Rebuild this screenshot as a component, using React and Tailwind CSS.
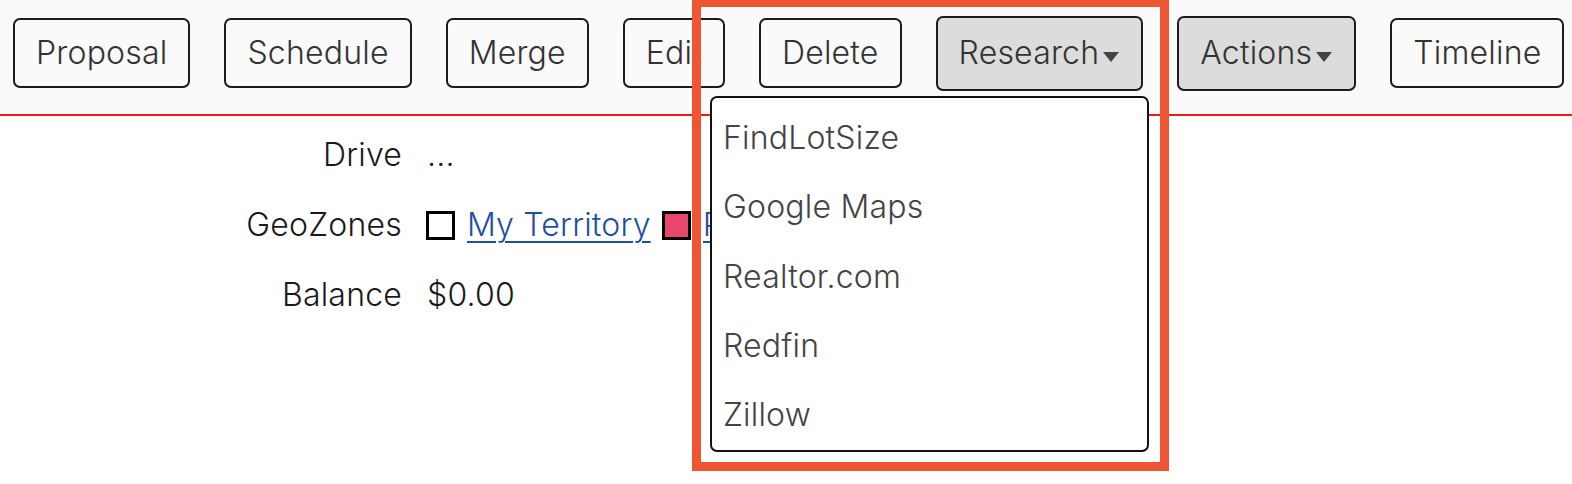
import React from "react";

const font = { fontFamily: "Inter, 'Liberation Sans', sans-serif" };

function Btn({ children, dd }) {
  return (
    <button
      className={
        dd
          ? "flex items-center h-[75px] px-[21px] border-2 border-[#1c1c1c] rounded-[7px] bg-[#dcdcdc] text-[#333] text-[32px] font-[350] tracking-[0.2px] leading-none"
          : "flex items-center h-[70px] px-[21px] border-2 border-[#1c1c1c] rounded-[7px] bg-[#fafafa] text-[#333] text-[32px] font-[350] tracking-[0.2px] leading-none"
      }
    >
      {children}
      {dd && (
        <svg width="18" height="12" viewBox="0 0 18 12" className="ml-[3px] mt-[8px]">
          <path d="M1 1 L17 1 L9 11 Z" fill="#444" />
        </svg>
      )}
    </button>
  );
}

export default function App() {
  return (
    <div className="relative w-[1572px] h-[484px] bg-white overflow-hidden" style={font}>
      <div className="h-[116px] bg-[#fafafa] border-b-2 border-[#ee1d12] flex items-center gap-[34px] pl-[13px] pb-[8px]">
        <Btn>Proposal</Btn>
        <Btn>Schedule</Btn>
        <Btn>Merge</Btn>
        <Btn>Edit</Btn>
        <Btn>Delete</Btn>
        <Btn dd>Research</Btn>
        <Btn dd>Actions</Btn>
        <Btn>Timeline</Btn>
      </div>

      <div className="pt-[4px] flex flex-col text-[32px] font-[350] tracking-[0.2px] text-[#1a1a1a]">
        <div className="flex items-center h-[70px]">
          <div className="w-[402px] text-right">Drive</div>
          <div className="ml-[25px]">...</div>
        </div>
        <div className="flex items-center h-[70px]">
          <div className="w-[402px] text-right">GeoZones</div>
          <div className="ml-[24px] flex items-center whitespace-nowrap">
            <span className="inline-block w-[29px] h-[29px] border-[3px] border-black bg-white"></span>
            <a href="#" className="ml-[12px] text-[#1f4fa3] underline decoration-[2px] underline-offset-[5px]">My Territory</a>
            <span className="ml-[11px] inline-block w-[29px] h-[29px] border-[3px] border-black bg-[#e8466b]"></span>
            <span className="ml-[12px] w-[20px] overflow-hidden">
              <a href="#" className="text-[#1f4fa3] underline decoration-[2px] underline-offset-[5px]">P</a>
            </span>
          </div>
        </div>
        <div className="flex items-center h-[70px]">
          <div className="w-[402px] text-right">Balance</div>
          <div className="ml-[25px]">$0.00</div>
        </div>
      </div>

      <div className="absolute left-[710px] top-[96px] w-[439px] h-[356px] bg-white border-2 border-[#111] rounded-[7px] flex flex-col pt-[5px] text-[32px] font-[350] tracking-[0.2px] text-[#444]">
        {["FindLotSize", "Google Maps", "Realtor.com", "Redfin", "Zillow"].map((t) => (
          <div key={t} className="h-[70px] flex items-center px-[11px]">{t}</div>
        ))}
      </div>

      <div className="absolute left-[692px] top-[-2px] w-[477px] h-[473px] border-[9px] border-[#ee5533] pointer-events-none"></div>
    </div>
  );
}
